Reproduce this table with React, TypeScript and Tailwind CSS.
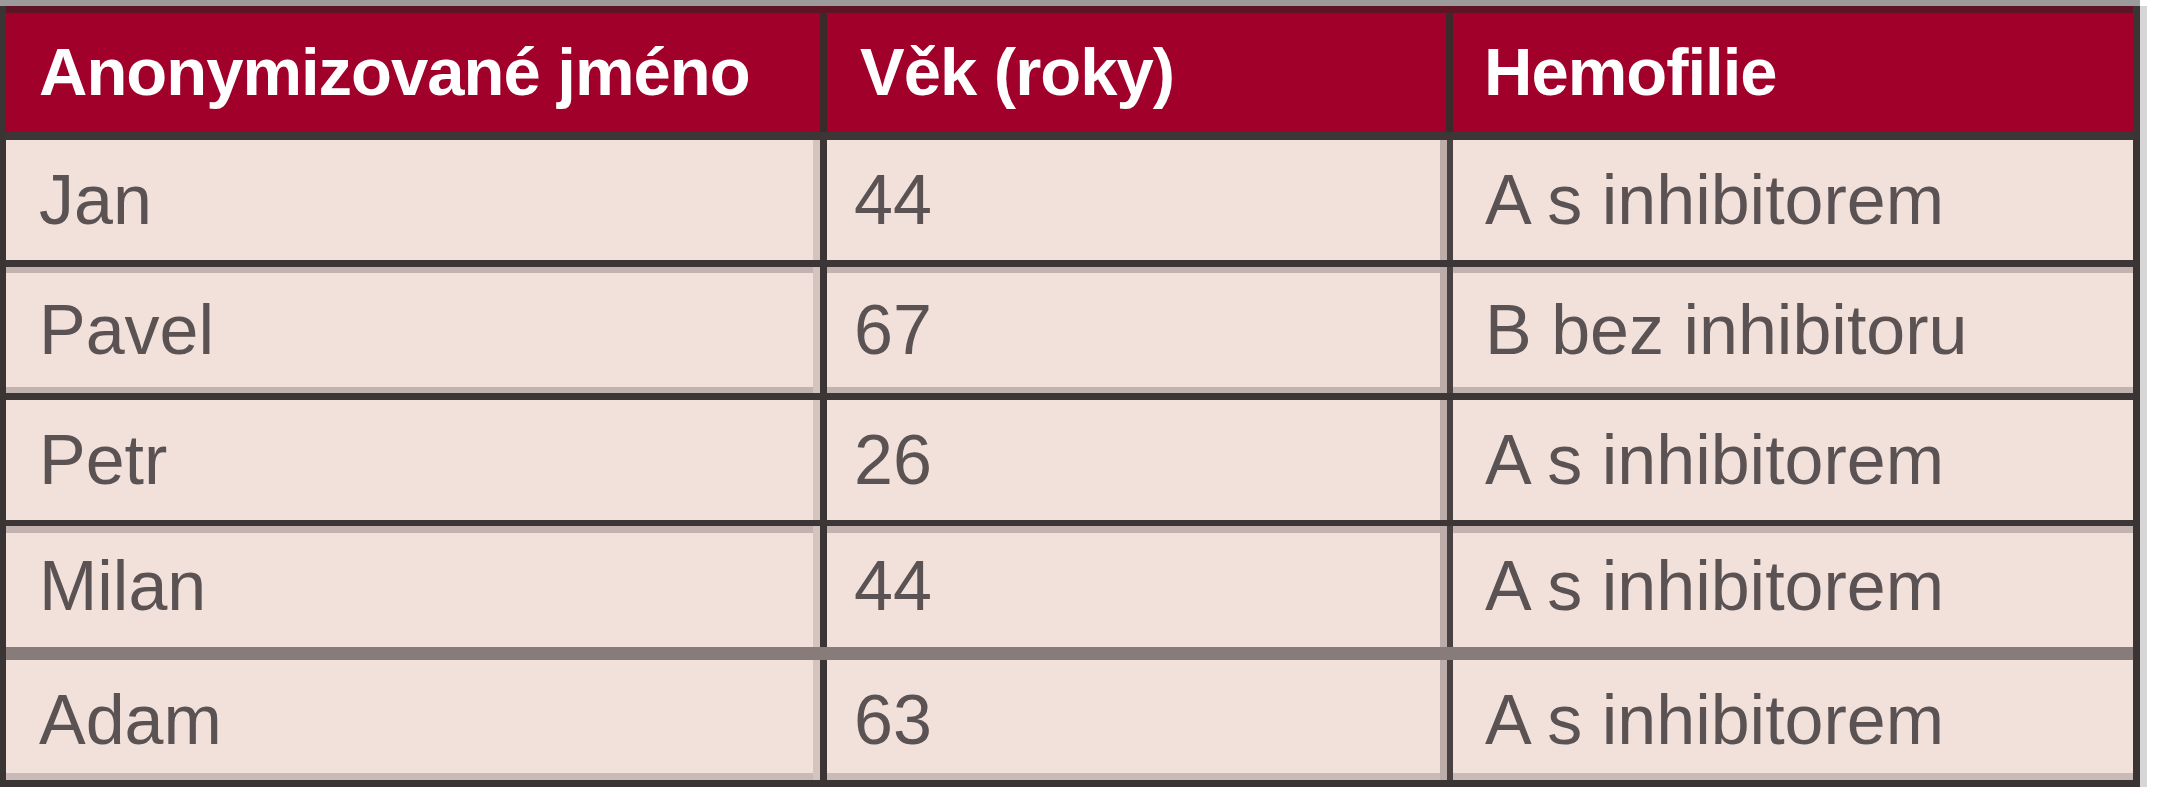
const HEADERS = ["Anonymizované jméno", "Věk (roky)", "Hemofilie"];

// heights include the bottom border (border-box)
const ROWS = [
  {
    cells: ["Jan", "44", "A s inhibitorem"],
    row: "h-[127px] border-b-[7px] border-[#3d3636]",
  },
  {
    cells: ["Pavel", "67", "B bez inhibitoru"],
    row: "h-[133px] border-b-[7px] border-[#3d3636] shadow-[inset_0_6px_0_#c3b3b0,inset_0_-6px_0_#c3b3b0]",
  },
  {
    cells: ["Petr", "26", "A s inhibitorem"],
    row: "h-[126px] border-b-[6px] border-[#3d3636]",
  },
  {
    cells: ["Milan", "44", "A s inhibitorem"],
    row: "h-[134px] border-b-[13px] border-[#877c7a] shadow-[inset_0_7px_0_#c3b3b0]",
  },
  {
    cells: ["Adam", "63", "A s inhibitorem"],
    row: "h-[120px] shadow-[inset_0_-7px_0_#c9bab7]",
  },
];

const App = () => {
  return (
    <div
      className="w-[2160px] h-[800px] bg-white"
      style={{ fontFamily: '"Liberation Sans", Arial, sans-serif' }}
    >
      <div className="w-[2140px] h-[6px] bg-[#9c9a9a]" />
      <div className="w-[2140px] border-x-[6px] border-r-[7px] border-b-[7px] border-[#3b3434] shadow-[7px_0_0_#d7d5d5]">
        <div className="grid grid-cols-[821px_626px_680px] h-[134px] border-t-[7px] border-[#5e1424] bg-[#a00029] border-b-[8px] border-b-[#3d3636]">
          {HEADERS.map((h, i) => (
            <div
              key={h}
              className={
                i < 2
                  ? "flex items-center pl-[33px] border-r-[7px] border-[#3a2a2c] text-[67px] font-bold text-white tracking-[-1px]"
                  : "flex items-center pl-[31px] text-[67px] font-bold text-white tracking-[-1px]"
              }
            >
              {h}
            </div>
          ))}
        </div>
        {ROWS.map((r, ri) => (
          <div
            key={ri}
            className={"grid grid-cols-[821px_626px_680px] bg-[#f2e1db] " + r.row}
          >
            {r.cells.map((c, i) => (
              <div
                key={i}
                className={
                  i === 0
                    ? "flex items-center pl-[33px] border-r-[7px] border-[#3b3434] shadow-[inset_-7px_0_0_#d4c4c0] text-[70px] text-[#5a5253]"
                    : i === 1
                      ? "flex items-center pl-[27px] border-r-[6px] border-[#4a4242] shadow-[inset_-7px_0_0_#bcadaa] text-[70px] text-[#5a5253]"
                      : "flex items-center pl-[32px] text-[70px] text-[#5a5253]"
                }
              >
                {c}
              </div>
            ))}
          </div>
        ))}
      </div>
    </div>
  );
};

export default App;
